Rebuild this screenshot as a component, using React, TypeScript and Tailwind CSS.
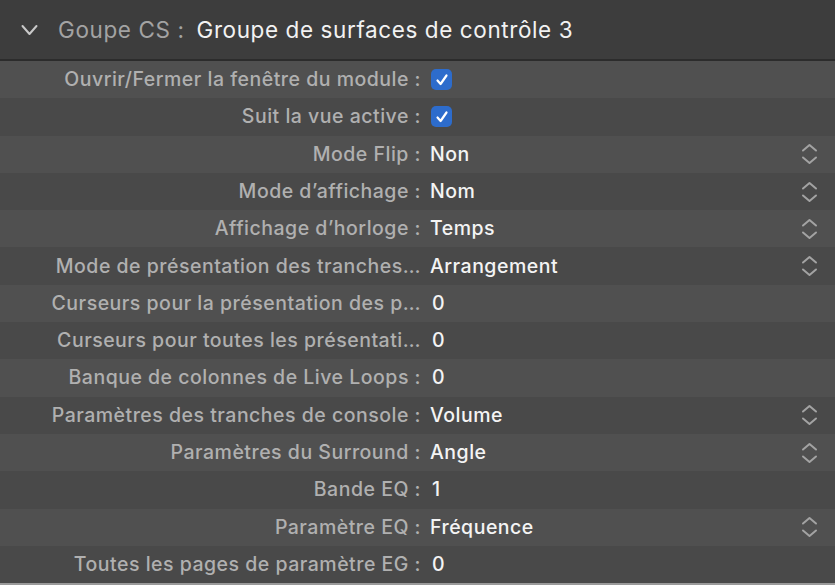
import React from "react";

type Row = { label: string; value?: string; check?: boolean; popup?: boolean };

const rows: Row[] = [
  { label: "Ouvrir/Fermer la fenêtre du module :", check: true },
  { label: "Suit la vue active :", check: true },
  { label: "Mode Flip :", value: "Non", popup: true },
  { label: "Mode d’affichage :", value: "Nom", popup: true },
  { label: "Affichage d’horloge :", value: "Temps", popup: true },
  { label: "Mode de présentation des tranches…", value: "Arrangement", popup: true },
  { label: "Curseurs pour la présentation des p…", value: "0" },
  { label: "Curseurs pour toutes les présentati…", value: "0" },
  { label: "Banque de colonnes de Live Loops :", value: "0" },
  { label: "Paramètres des tranches de console :", value: "Volume", popup: true },
  { label: "Paramètres du Surround :", value: "Angle", popup: true },
  { label: "Bande EQ :", value: "1" },
  { label: "Paramètre EQ :", value: "Fréquence", popup: true },
  { label: "Toutes les pages de paramètre EG :", value: "0" },
];

function UpDown() {
  return (
    <svg width="17" height="24" viewBox="0 0 17 24" fill="none" stroke="#a3a3a3" strokeWidth="2" strokeLinecap="round" strokeLinejoin="round">
      <path d="M2 8.5 L8.5 3 L15 8.5" />
      <path d="M2 15.5 L8.5 21 L15 15.5" />
    </svg>
  );
}

function Check() {
  return (
    <div className="w-[21px] h-[21px] rounded-[5px] bg-[#2d6ccc] flex items-center justify-center">
      <svg width="14" height="14" viewBox="0 0 14 14" fill="none" stroke="#ffffff" strokeWidth="2.2" strokeLinecap="round" strokeLinejoin="round">
        <path d="M2.5 7.5 L5.6 11 L11.5 2.5" />
      </svg>
    </div>
  );
}

export default function App() {
  return (
    <div className="w-[835px] h-[585px] overflow-hidden bg-[#4d4d4d] flex flex-col" style={{ fontFamily: "Inter, 'Noto Sans', sans-serif" }}>
      <div className="h-[59px] shrink-0 bg-[#3d3d3d] flex items-center pl-[21px] border-b-2 border-[#2c2c2c] box-content">
        <svg width="17" height="12" viewBox="0 0 17 12" fill="none" stroke="#c9c9c9" strokeWidth="2" strokeLinecap="round" strokeLinejoin="round">
          <path d="M1.5 2 L8.5 10 L15.5 2" />
        </svg>
        <span className="ml-[20px] text-[22.5px] tracking-[0.6px] text-[#a3a3a3]">Goupe CS :</span>
        <span className="ml-[12px] text-[22.5px] tracking-[0.6px] text-[#f2f2f2]">Groupe de surfaces de contrôle 3</span>
      </div>
      <div className="flex flex-col">
        {rows.map((r, i) => (
          <div
            key={i}
            className={`flex items-center shrink-0 h-[37.3px] ${i % 2 === 0 ? "bg-[#505050]" : "bg-[#494949]"}`}
          >
            <div className="w-[421px] shrink-0 text-right text-[19.5px] tracking-[0.5px] font-medium text-[#b0b0b0] whitespace-nowrap overflow-hidden">
              {r.label}
            </div>
            <div className="flex-1 flex items-center pl-[9px] pr-[17px]">
              {r.check ? (
                <div className="ml-[1px]"><Check /></div>
              ) : (
                <span className={`text-[19.5px] tracking-[0.5px] font-medium text-[#f4f4f4] ${r.popup ? "" : "ml-[2px]"}`}>{r.value}</span>
              )}
              {r.popup && (
                <div className="ml-auto">
                  <UpDown />
                </div>
              )}
            </div>
          </div>
        ))}
      </div>
      <div className="flex-1 bg-[#9a9a9a]" />
    </div>
  );
}
